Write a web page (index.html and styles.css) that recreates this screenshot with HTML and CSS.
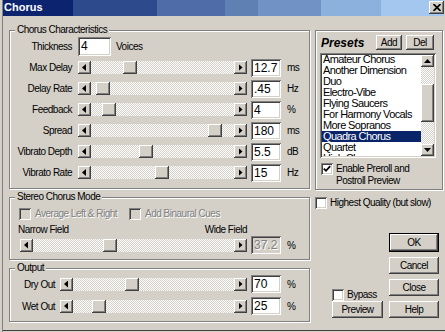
FILE: index.html
```html
<!DOCTYPE html>
<html>
<head>
<meta charset="utf-8">
<link rel="stylesheet" href="styles.css">
</head>
<body>
<div class="window">
  <div class="titlebar">
    <span class="title">Chorus</span>
    <span class="close"><svg width="8" height="7" viewBox="0 0 8 7"><path d="M0.5 0L7.5 7M7.5 0L0.5 7" stroke="#000" stroke-width="1.7"/></svg></span>
  </div>
  <div class="client">
    <div class="left">
      <div class="group g-char">
        <div class="gtitle">Chorus Characteristics</div>
        <div class="row">
          <span class="lbl">Thickness</span><span class="inp thick">4</span><span class="voices">Voices</span>
        </div>
        <div class="row">
          <span class="lbl">Max Delay</span>
          <div class="slider"><span class="sbtn l"></span><span class="track"><span class="thumb" style="margin-left:32px"></span></span><span class="sbtn r"></span></div>
          <span class="inp">12.7</span><span class="unit">ms</span>
        </div>
        <div class="row">
          <span class="lbl">Delay Rate</span>
          <div class="slider"><span class="sbtn l"></span><span class="track"><span class="thumb" style="margin-left:5px"></span></span><span class="sbtn r"></span></div>
          <span class="inp">.45</span><span class="unit">Hz</span>
        </div>
        <div class="row">
          <span class="lbl">Feedback</span>
          <div class="slider"><span class="sbtn l"></span><span class="track"><span class="thumb" style="margin-left:11px"></span></span><span class="sbtn r"></span></div>
          <span class="inp">4</span><span class="unit">%</span>
        </div>
        <div class="row">
          <span class="lbl">Spread</span>
          <div class="slider"><span class="sbtn l"></span><span class="track"><span class="thumb" style="margin-left:117px"></span></span><span class="sbtn r"></span></div>
          <span class="inp">180</span><span class="unit">ms</span>
        </div>
        <div class="row">
          <span class="lbl">Vibrato Depth</span>
          <div class="slider"><span class="sbtn l"></span><span class="track"><span class="thumb" style="margin-left:48px"></span></span><span class="sbtn r"></span></div>
          <span class="inp">5.5</span><span class="unit">dB</span>
        </div>
        <div class="row">
          <span class="lbl">Vibrato Rate</span>
          <div class="slider"><span class="sbtn l"></span><span class="track"><span class="thumb" style="margin-left:64px"></span></span><span class="sbtn r"></span></div>
          <span class="inp">15</span><span class="unit">Hz</span>
        </div>
      </div>

      <div class="group g-stereo">
        <div class="gtitle">Stereo Chorus Mode</div>
        <div class="cbrow">
          <span class="cbitem avg"><span class="cb dis"></span><span class="dis-text">Average Left &amp; Right</span></span>
          <span class="cbitem"><span class="cb dis"></span><span class="dis-text">Add Binaural Cues</span></span>
        </div>
        <div class="fieldlbls"><span>Narrow Field</span><span>Wide Field</span></div>
        <div class="row narrow">
          <div class="slider long"><span class="sbtn l"></span><span class="track"><span class="thumb" style="margin-left:70px"></span></span><span class="sbtn r"></span></div>
          <span class="inp disabled">37.2</span><span class="unit">%</span>
        </div>
      </div>

      <div class="group g-out">
        <div class="gtitle">Output</div>
        <div class="row out first-out">
          <span class="lbl">Dry Out</span>
          <div class="slider mid"><span class="sbtn l"></span><span class="track"><span class="thumb" style="margin-left:52px"></span></span><span class="sbtn r"></span></div>
          <span class="inp">70</span><span class="unit">%</span>
        </div>
        <div class="row out">
          <span class="lbl">Wet Out</span>
          <div class="slider mid"><span class="sbtn l"></span><span class="track"><span class="thumb" style="margin-left:19px"></span></span><span class="sbtn r"></span></div>
          <span class="inp">25</span><span class="unit">%</span>
        </div>
      </div>
    </div>

    <div class="right">
      <div class="presets">
        <div class="prow">
          <span class="ptitle">Presets</span>
          <span class="btn add">Add</span>
          <span class="btn del">Del</span>
        </div>
        <div class="listbox">
          <div class="items">
            <div class="item first">Amateur Chorus</div>
            <div class="item">Another Dimension</div>
            <div class="item">Duo</div>
            <div class="item">Electro-Vibe</div>
            <div class="item">Flying Saucers</div>
            <div class="item">For Harmony Vocals</div>
            <div class="item">More Sopranos</div>
            <div class="item sel">Quadra Chorus</div>
            <div class="item">Quartet</div>
            <div class="item">High Chorus</div>
          </div>
          <div class="vscroll">
            <span class="sbtn u"></span>
            <span class="vtrack"><span class="vthumb"></span></span>
            <span class="sbtn d"></span>
          </div>
        </div>
        <div class="enable">
          <span class="cb"><svg width="8" height="8" viewBox="0 0 8 8"><path d="M0.8 3.6L3 5.8L7.2 1.2" fill="none" stroke="#000" stroke-width="1.8"/></svg></span>
          <span class="etext">Enable Preroll and<br>Postroll Preview</span>
        </div>
      </div>
      <div class="hq"><span class="cb"></span><span>Highest Quality (but slow)</span></div>

      <div class="bottom">
        <div class="bleft">
          <div class="bypass"><span class="cb"></span><span>Bypass</span></div>
          <span class="btn preview">Preview</span>
        </div>
        <div class="bcol">
          <span class="btn ok">OK</span>
          <span class="btn">Cancel</span>
          <span class="btn">Close</span>
          <span class="btn">Help</span>
        </div>
      </div>
    </div>
  </div>
</div>
</body>
</html>
```

FILE: styles.css
```css
* { box-sizing: border-box; }
body {
  margin: 0;
  background: #d4d0c8;
  font-family: "Liberation Sans", Arial, sans-serif;
  font-size: 10px;
  letter-spacing: -0.5px;
  color: #000;
}
.window {
  width: 445px;
  height: 332px;
  padding: 0 1px 2px 3px;
  background: #d4d0c8;
  box-shadow: inset 2px 0 #d4d0c8, inset 3px 0 #808080, inset 0 -1px #d4d0c8, inset 0 -2px #404040;
  display: flex;
  flex-direction: column;
}
.titlebar {
  height: 16px;
  display: flex;
  justify-content: space-between;
  align-items: flex-start;
  padding-left: 1px;
  background: linear-gradient(to right, #0c2470 0 70px, #2d4a8c 70px 154px, #4f6ca8 154px 222px, #5f80b2 222px 255px, #7192c4 255px 318px, #8db1dd 318px 378px, #a3c7ef 378px);
}
.title {
  color: #fff;
  font: bold 11px "Liberation Sans", Arial, sans-serif;
  letter-spacing: 0;
  line-height: 15px;
}
.close {
  width: 15px;
  height: 13px;
  margin-top: 1px;
  display: flex;
  align-items: center;
  justify-content: center;
}
.close, .sbtn, .thumb, .btn, .vthumb {
  background-color: #d4d0c8;
  box-shadow: inset -1px -1px #404040, inset 1px 1px #fff, inset -2px -2px #808080;
}
.client {
  flex: 1;
  display: flex;
  padding: 0 1px 0 6px;
}
.left {
  width: 301px;
  padding-top: 14px;
}
.right {
  width: 128px;
  margin-left: 5px;
  padding-top: 14px;
  display: flex;
  flex-direction: column;
}
.group {
  border: 1px solid #808080;
  box-shadow: inset 1px 1px #fff, 1px 1px #fff;
}
.gtitle {
  display: table;
  margin: -7px 0 0 5px;
  padding: 0 2px;
  background: #d4d0c8;
  line-height: 12px;
  height: 12px;
}
.g-char { padding-bottom: 5px; }
.g-stereo { margin-top: 8px; padding-bottom: 5px; }
.g-out { margin-top: 8px; padding-bottom: 4px; }

.row {
  display: flex;
  align-items: center;
  height: 21px;
}
.lbl {
  width: 62px;
  margin-right: 6px;
  text-align: right;
  white-space: nowrap;
}
.inp {
  width: 30px;
  height: 18px;
  margin-left: 4px;
  padding: 0 0 0 3px;
  line-height: 18px;
  font-size: 12px;
  letter-spacing: 0;
  background: #fff;
  box-shadow: inset 1px 1px #808080, inset -1px -1px #fff, inset 2px 2px #404040, inset -2px -2px #d4d0c8;
}
.inp.thick {
  width: 33px;
  height: 19px;
  margin-left: 0;
}
.inp.disabled {
  background: #d4d0c8;
  color: #808080;
  text-shadow: 1px 1px #fff;
}
.voices { margin-left: 5px; }
.unit { margin-left: 6px; }

.slider {
  width: 169px;
  height: 13px;
  display: flex;
}
.slider.long { width: 227px; }
.slider.mid { width: 187px; }
.sbtn {
  width: 13px;
  height: 13px;
  flex: none;
  display: flex;
  align-items: center;
  justify-content: center;
}
.sbtn::before {
  content: "";
  display: block;
  background: #000;
}
.sbtn.l::before { width: 4px; height: 7px; clip-path: polygon(100% 0, 100% 100%, 0 50%); margin-left: -1px; }
.sbtn.r::before { width: 4px; height: 7px; clip-path: polygon(0 0, 100% 50%, 0 100%); }
.sbtn.u::before { width: 7px; height: 4px; clip-path: polygon(50% 0, 100% 100%, 0 100%); }
.sbtn.d::before { width: 7px; height: 4px; clip-path: polygon(0 0, 100% 0, 50% 100%); }
.track {
  flex: 1;
  height: 13px;
  display: flex;
  background-color: #fff;
  background-image: conic-gradient(#d4d0c8 25%, #fff 0 50%, #d4d0c8 0 75%, #fff 0);
  background-size: 2px 2px;
}
.thumb {
  width: 14px;
  height: 13px;
  flex: none;
}

.cb {
  width: 12px;
  height: 12px;
  flex: none;
  background: #fff;
  display: flex;
  align-items: center;
  justify-content: center;
  box-shadow: inset 1px 1px #808080, inset -1px -1px #fff, inset 2px 2px #404040, inset -2px -2px #d4d0c8;
}
.cb.dis { background: #d4d0c8; }
.dis-text {
  color: #808080;
  text-shadow: 1px 1px #fff;
}
.cbrow {
  display: flex;
  align-items: center;
  height: 15px;
  margin: 3px 0 0 9px;
}
.cbitem {
  display: flex;
  align-items: center;
  white-space: nowrap;
}
.cbitem .cb { margin-right: 4px; }
.cbitem.avg { width: 110px; }
.fieldlbls {
  display: flex;
  justify-content: space-between;
  width: 229px;
  height: 12px;
  line-height: 12px;
  margin: 3px 0 0 8px;
}
.row.narrow {
  height: 18px;
  padding-left: 10px;
}
.row.out { height: 22px; }
.row.out .lbl { width: 45px; margin-right: 5px; }
.first-out { margin-top: -1px; }

.presets {
  height: 160px;
  border: 1px solid #808080;
  box-shadow: inset 1px 1px #fff, 1px 1px #fff;
  padding: 4px 4px 0 4px;
}
.prow {
  display: flex;
  align-items: center;
  height: 15px;
  margin-right: 4px;
}
.ptitle {
  margin-left: 1px;
  font: italic bold 12px "Liberation Sans", Arial, sans-serif;
  letter-spacing: 0;
}
.btn {
  height: 17px;
  display: flex;
  align-items: center;
  justify-content: center;
  white-space: nowrap;
}
.btn.add { width: 26px; height: 15px; margin-left: auto; }
.btn.del { width: 28px; height: 15px; margin-left: 4px; }
.listbox {
  margin-top: 3px;
  width: 116px;
  height: 105px;
  padding: 2px;
  display: flex;
  background: #fff;
  box-shadow: inset 1px 1px #808080, inset -1px -1px #fff, inset 2px 2px #404040, inset -2px -2px #d4d0c8;
}
.items {
  flex: 1;
  overflow: hidden;
}
.item {
  height: 11px;
  line-height: 11px;
  font-size: 11px;
  letter-spacing: -0.6px;
  padding-left: 1px;
  white-space: nowrap;
}
.item.first { margin-top: -1px; }
.item.sel {
  background: #0a246a;
  color: #fff;
}
.vscroll {
  width: 13px;
  display: flex;
  flex-direction: column;
}
.vscroll .sbtn { height: 12px; }
.vtrack {
  flex: 1;
  background-color: #fff;
  background-image: conic-gradient(#d4d0c8 25%, #fff 0 50%, #d4d0c8 0 75%, #fff 0);
  background-size: 2px 2px;
}
.vthumb {
  display: block;
  height: 38px;
  margin-top: 17px;
}
.enable {
  display: flex;
  align-items: flex-start;
  margin-top: 5px;
  margin-left: 1px;
}
.etext {
  margin-left: 3px;
  line-height: 12px;
}
.hq {
  display: flex;
  align-items: center;
  height: 13px;
  margin-top: 6px;
  white-space: nowrap;
}
.hq .cb, .bypass .cb { margin-right: 3px; }
.bottom {
  margin-top: auto;
  margin-bottom: 12px;
  display: flex;
  align-items: flex-end;
}
.bleft {
  margin-left: 17px;
  width: 51px;
}
.bypass {
  display: flex;
  align-items: center;
  height: 13px;
}
.bcol {
  margin-left: 6px;
  width: 50px;
  display: flex;
  flex-direction: column;
  gap: 5px;
}
.btn.ok {
  height: 19px;
  border: 1px solid #000;
}
```
